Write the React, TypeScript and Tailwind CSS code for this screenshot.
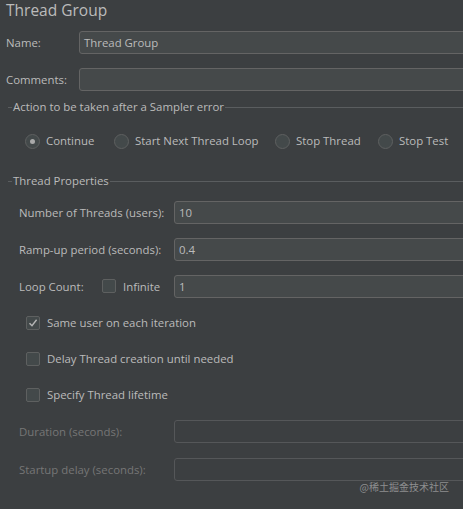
import React from 'react'

const font = { fontFamily: '"Open Sans", "Noto Sans", sans-serif' }

function Field({ value = '', disabled = false }: { value?: string; disabled?: boolean }) {
  return (
    <div
      className={`flex-1 h-[23px] -mr-[20px] rounded-[3px] border flex items-center pl-[4px] ${
        disabled ? 'border-[#555759] bg-[#3c3f41]' : 'border-[#646464] bg-[#45494a] text-[#bbbbbb]'
      }`}
    >
      {value}
    </div>
  )
}

function Radio({ checked, label }: { checked?: boolean; label: string }) {
  return (
    <div className="flex items-center gap-[6px]">
      <span className="w-[15px] h-[15px] rounded-full border border-[#5e6060] bg-[#43494a] flex items-center justify-center">
        {checked && <span className="w-[5px] h-[5px] rounded-full bg-[#a9a9a9]" />}
      </span>
      <span>{label}</span>
    </div>
  )
}

function Check({ checked, label }: { checked?: boolean; label: string }) {
  return (
    <div className="flex items-center gap-[7px]">
      <span className="w-[14px] h-[14px] rounded-[2px] border border-[#5e6060] bg-[#43494a] flex items-center justify-center">
        {checked && (
          <svg width="10" height="10" viewBox="0 0 10 10">
            <path d="M1.5 5.2 L4 7.8 L8.6 1.8" fill="none" stroke="#b5b5b5" strokeWidth="1.4" />
          </svg>
        )}
      </span>
      <span>{label}</span>
    </div>
  )
}

function GroupTitle({ title }: { title: string }) {
  return (
    <div className="flex items-center h-[16px] ml-[8px] -mr-[20px]">
      <div className="w-[4px] h-px bg-[#5a5d5f]" />
      <span className="px-[1px]">{title}</span>
      <div className="flex-1 h-px bg-[#5a5d5f]" />
    </div>
  )
}

export default function App() {
  return (
    <div
      className="w-[463px] h-[509px] overflow-hidden bg-[#3c3f41] text-[#bbbbbb] text-[11.4px] relative"
      style={font}
    >
      <div className="pl-[6px] h-[22px] flex items-center text-[15.5px] leading-none">Thread Group</div>

      <div className="flex items-center mt-[9px] pl-[6px]">
        <span className="w-[73px]">Name:</span>
        <Field value="Thread Group" />
      </div>
      <div className="flex items-center mt-[14px] pl-[6px]">
        <span className="w-[73px]">Comments:</span>
        <Field />
      </div>

      <div className="mt-[8px]">
        <GroupTitle title="Action to be taken after a Sampler error" />
      </div>
      <div className="flex items-center h-[16px] mt-[18px] pl-[25px]">
        <div className="w-[89px]"><Radio checked label="Continue" /></div>
        <div className="w-[161px]"><Radio label="Start Next Thread Loop" /></div>
        <div className="w-[103px]"><Radio label="Stop Thread" /></div>
        <Radio label="Stop Test" />
      </div>

      <div className="mt-[24px]">
        <GroupTitle title="Thread Properties" />
      </div>

      <div className="pl-[19px]">
        <div className="flex items-center mt-[12px]">
          <span className="w-[155px]">Number of Threads (users):</span>
          <Field value="10" />
        </div>
        <div className="flex items-center mt-[14px]">
          <span className="w-[155px]">Ramp-up period (seconds):</span>
          <Field value="0.4" />
        </div>
        <div className="flex items-center mt-[14px]">
          <span className="w-[83px]">Loop Count:</span>
          <div className="w-[72px]"><Check label="Infinite" /></div>
          <Field value="1" />
        </div>
      </div>

      <div className="pl-[26px] flex flex-col gap-[22px] mt-[18px]">
        <div className="h-[14px] flex items-center"><Check checked label="Same user on each iteration" /></div>
        <div className="h-[14px] flex items-center"><Check label="Delay Thread creation until needed" /></div>
        <div className="h-[14px] flex items-center"><Check label="Specify Thread lifetime" /></div>
      </div>

      <div className="pl-[19px] text-[#767676]">
        <div className="flex items-center mt-[18px]">
          <span className="w-[155px]">Duration (seconds):</span>
          <Field disabled />
        </div>
        <div className="flex items-center mt-[15px]">
          <span className="w-[155px]">Startup delay (seconds):</span>
          <Field disabled />
        </div>
      </div>

      <div
        className="absolute right-[14px] bottom-[15px] text-[10px] text-[#8d8e8f]"
        style={{ fontFamily: '"Noto Sans CJK SC", sans-serif' }}
      >
        @稀土掘金技术社区
      </div>
    </div>
  )
}
